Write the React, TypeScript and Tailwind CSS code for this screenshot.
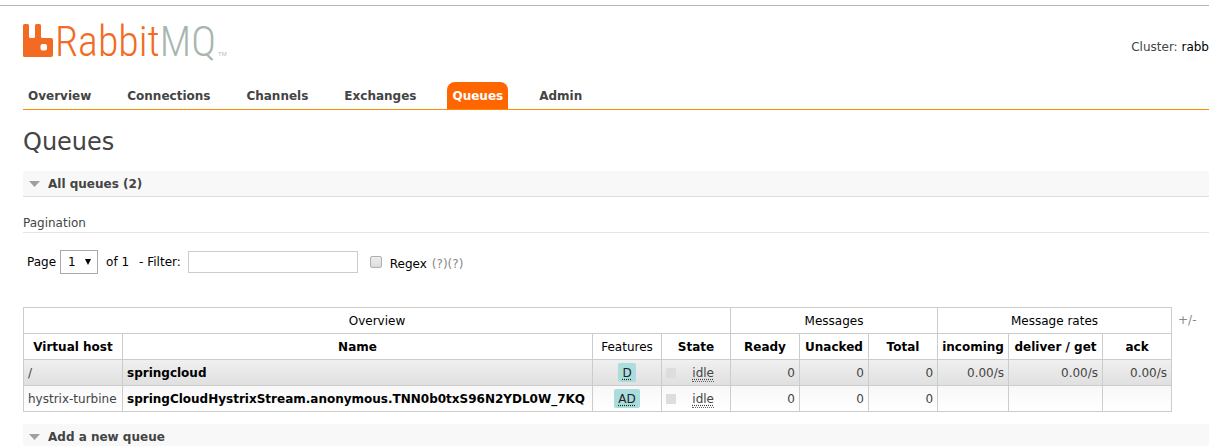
import { useState, type ReactNode } from "react";

const tabs = ["Overview", "Connections", "Channels", "Exchanges", "Queues", "Admin"];

type Queue = {
  vhost: string;
  name: string;
  features: string;
  rates: string[];
};

const queues: Queue[] = [
  { vhost: "/", name: "springcloud", features: "D", rates: ["0.00/s", "0.00/s", "0.00/s"] },
  {
    vhost: "hystrix-turbine",
    name: "springCloudHystrixStream.anonymous.TNN0b0txS96N2YDL0W_7KQ",
    features: "AD",
    rates: ["", "", ""],
  },
];

function Logo() {
  return (
    <a href="#overview" aria-label="RabbitMQ" className="block">
      <svg width="206" height="40" viewBox="0 0 206 40" className="block overflow-visible">
        <path
          fill="#f36a22"
          fillRule="evenodd"
          d="M1.5 3H4.500Q6 3 6 4.500V15.500Q6 17 7.500 17H10.500Q12 17 12 15.500V4.500Q12 3 13.500 3H16.500Q18 3 18 4.500V15.500Q18 17 19.500 17H28Q30 17 30 19V34Q30 36 28 36H1.500Q0 36 0 34.500V4.500Q0 3 1.500 3ZM19.500 23Q17.500 23 17.500 25V27.500Q17.500 29.500 19.500 29.500H22Q24 29.500 24 27.500V25Q24 23 22 23Z"
        />
        <text
          x="32"
          y="35"
          className="text-[42px] font-light [font-family:'Liberation_Sans_Narrow','Roboto_Condensed','Roboto',sans-serif]"
        >
          <tspan fill="#f36a22">Rabbit</tspan>
          <tspan fill="#a9b6b0">MQ</tspan>
        </text>
        <text x="195" y="35" fill="#b4bdb9" className="text-[6px] [font-family:'Liberation_Sans',sans-serif]">
          TM
        </text>
      </svg>
    </a>
  );
}

function SectionBar({ children }: { children: ReactNode }) {
  return (
    <h2 className="border-b border-[#ddd] bg-[#f8f8f8] text-xs font-bold">
      <button type="button" className="flex h-[25px] w-full items-center gap-2 pl-[6px] text-left">
        <svg width="11" height="6" viewBox="0 0 11 6" aria-hidden="true">
          <path d="M0 0H11L5.500 6Z" fill="#a0a0a0" />
        </svg>
        {children}
      </button>
    </h2>
  );
}

const th = "border border-[#ccc] px-1 text-center text-black";
const td = "border border-[#ccc] px-1";

export default function App() {
  const [filter, setFilter] = useState("");
  const [regex, setRegex] = useState(false);

  return (
    <div className="overflow-hidden bg-white pt-[5px] text-xs text-[#444] [font-family:'DejaVu_Sans',Verdana,sans-serif]">
      <div className="border-t border-[#b4b4b4] pl-[23px]">
        <header className="flex items-start justify-between pt-[15px]">
          <Logo />
          <p className="pt-[18px] whitespace-nowrap">
            Cluster: <b className="font-normal text-black">rabb</b>
          </p>
        </header>

        <nav className="mt-[21px] flex gap-[26px] border-b border-[#ff8c00]">
          {tabs.map((tab) => (
            <a
              key={tab}
              href={"#" + tab.toLowerCase()}
              className={
                tab === "Queues"
                  ? "flex h-[27px] items-center rounded-t-lg bg-[#ff6600] px-[5px] font-bold text-white"
                  : "flex h-[27px] items-center px-[5px] font-bold"
              }
            >
              {tab}
            </a>
          ))}
        </nav>

        <main>
          <h1 className="mt-4 mb-[13px] text-2xl">Queues</h1>
          <SectionBar>All queues (2)</SectionBar>

          <h3 className="mt-[17px] border-b border-[#e4e4e4] leading-[18px]">Pagination</h3>

          <form className="mt-[17px] flex h-6 items-center pl-1 text-black">
            <label htmlFor="page">Page</label>
            <span className="relative ml-1 block">
              <select
                id="page"
                className="block h-6 w-[38px] appearance-none border border-[#a9a9a9] bg-white pl-[7px]"
              >
                <option>1</option>
              </select>
              <svg
                width="6"
                height="6"
                viewBox="0 0 6 6"
                aria-hidden="true"
                className="pointer-events-none absolute top-[9px] right-[7px]"
              >
                <path d="M0 0H6L3 6Z" fill="#000" />
              </svg>
            </span>
            <span className="ml-2">of 1</span>
            <label htmlFor="filter" className="ml-[10px] whitespace-nowrap">
              - Filter:
            </label>
            <input
              id="filter"
              type="text"
              value={filter}
              onChange={(e) => setFilter(e.target.value)}
              className="ml-[7px] h-[22px] w-[170px] border border-[#ccc] px-1"
            />
            <input
              id="regex"
              type="checkbox"
              checked={regex}
              onChange={(e) => setRegex(e.target.checked)}
              className="ml-3 size-3 appearance-none rounded-xs border border-[#b0b0b0] bg-linear-to-b from-[#eee] to-[#dcdcdc] checked:bg-[#888]"
            />
            <span className="ml-2 flex pt-1">
              <label htmlFor="regex">Regex</label>
              <a href="#regex-help" className="ml-[5px] text-[#888]">
                (?)
              </a>
              <a href="#filter-help" className="text-[#888]">
                (?)
              </a>
            </span>
          </form>

          <div className="mt-[33px] flex items-start gap-[6px]">
            <table className="w-[1149px] shrink-0 table-fixed border-collapse whitespace-nowrap">
              <colgroup>
                <col className="w-[99px]" />
                <col className="w-[470px]" />
                <col className="w-[69px]" />
                <col className="w-[69px]" />
                <col className="w-[69px]" />
                <col className="w-[69px]" />
                <col className="w-[69px]" />
                <col className="w-[71px]" />
                <col className="w-[94px]" />
                <col className="w-[69px]" />
              </colgroup>
              <thead>
                <tr className="h-[26px]">
                  <th colSpan={4} className={th + " font-normal"}>
                    Overview
                  </th>
                  <th colSpan={3} className={th + " font-normal"}>
                    Messages
                  </th>
                  <th colSpan={3} className={th + " font-normal"}>
                    Message rates
                  </th>
                </tr>
                <tr className="h-[26px]">
                  <th className={th}>Virtual host</th>
                  <th className={th}>Name</th>
                  <th className={th + " font-normal"}>Features</th>
                  {["State", "Ready", "Unacked", "Total", "incoming", "deliver / get", "ack"].map((label) => (
                    <th key={label} className={th}>
                      {label}
                    </th>
                  ))}
                </tr>
              </thead>
              <tbody>
                {queues.map((q, i) => (
                  <tr
                    key={q.name}
                    className={
                      i % 2 === 0
                        ? "h-[26px] bg-linear-to-b from-[#f0f0f0] to-[#dfdfdf]"
                        : "h-[26px] bg-linear-to-b from-[#f8f8f8] to-white"
                    }
                  >
                    <td className={td}>{q.vhost}</td>
                    <td className={td}>
                      <a href={"#queue-" + i} className="font-bold text-black">
                        {q.name}
                      </a>
                    </td>
                    <td className={td + " text-center"}>
                      <span className="inline-block rounded-xs bg-[#aadddd] px-1 pt-0.5 align-middle leading-[17px] text-[#222]">
                        <abbr className="underline decoration-dotted underline-offset-2">{q.features}</abbr>
                      </span>
                    </td>
                    <td className={td}>
                      <div className="flex items-center justify-between pr-3">
                        <span className="size-[10px] bg-[#ddd]" />
                        <abbr className="border-b border-dotted border-[#666] pt-0.5 leading-[15px] underline decoration-dotted underline-offset-2">
                          idle
                        </abbr>
                      </div>
                    </td>
                    <td className={td + " text-right"}>0</td>
                    <td className={td + " text-right"}>0</td>
                    <td className={td + " text-right"}>0</td>
                    {q.rates.map((rate, n) => (
                      <td key={n} className={td + " text-right"}>
                        {rate}
                      </td>
                    ))}
                  </tr>
                ))}
              </tbody>
            </table>
            <a href="#columns" className="pt-[5px] text-[#888]">
              +/-
            </a>
          </div>

          <div className="mt-3">
            <SectionBar>Add a new queue</SectionBar>
          </div>
        </main>
      </div>
    </div>
  );
}
